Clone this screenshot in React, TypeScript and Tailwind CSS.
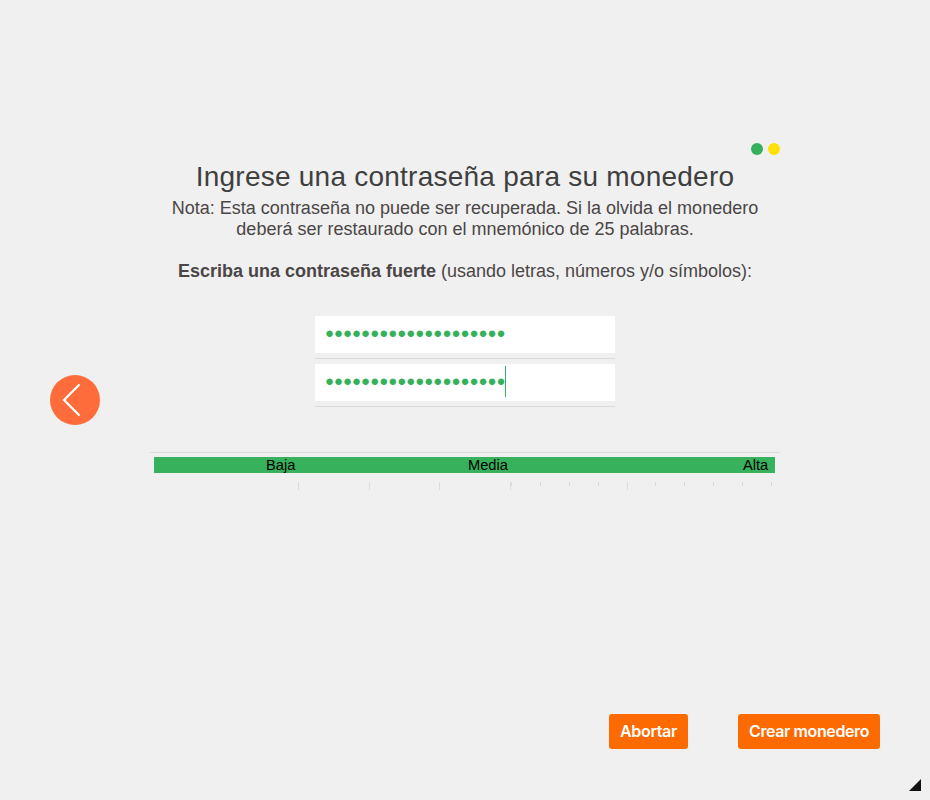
const MASK = "●".repeat(20);

function Field({ focused = false }: { focused?: boolean }) {
  return (
    <div className="h-[43px] w-[300px] border-b border-[#dbdbdb]">
      <div className="flex h-[37px] items-start bg-white pt-[2px] pl-[10px]">
        <span className="w-[180px] text-[15px] leading-[29px] tracking-[-0.03px] whitespace-nowrap text-[#36b05b]">
          {MASK}
        </span>
        {focused && <span className="h-[31px] w-px bg-[#36b05b]" />}
      </div>
    </div>
  );
}

// Gap before each tick of the scale, with whether the tick is a major one.
const TICKS = [
  { gap: 148, major: true },
  { gap: 70, major: true },
  { gap: 69, major: true },
  { gap: 70, major: true },
  { gap: 0, major: false },
  { gap: 28, major: false },
  { gap: 28, major: false },
  { gap: 28, major: false },
  { gap: 28, major: true },
  { gap: 27, major: false },
  { gap: 28, major: false },
  { gap: 28, major: false },
  { gap: 28, major: false },
  { gap: 28, major: false },
];

function StrengthMeter() {
  return (
    <div className="mt-[45px] w-[630px] border-t border-[#dbdbdb] pt-[4px]">
      <div className="ml-[4px] flex h-4 w-[621px] bg-[#38b15d] text-[14.67px] leading-4 text-black">
        <span className="ml-[112px] w-[202px]">Baja</span>
        <span className="w-[275px]">Media</span>
        <span>Alta</span>
      </div>
      <div className="mt-[9px] flex h-2">
        {TICKS.map((t, i) => (
          <span
            key={i}
            className={t.major ? "h-2 w-px shrink-0 bg-[#dbdbdb]" : "h-1 w-px shrink-0 bg-[#dbdbdb]"}
            style={{ marginLeft: t.gap }}
          />
        ))}
      </div>
    </div>
  );
}

export default function App() {
  return (
    <div className="flex h-[800px] w-[930px] flex-col bg-[#f0f0f0] font-['Liberation_Sans',Arial,sans-serif]">
      <div className="flex h-[714px] shrink-0">
        <button aria-label="Atrás" className="mt-[375px] ml-[50px] size-[50px] shrink-0 rounded-full bg-[#ff6c3c]">
          <svg width="50" height="50" viewBox="0 0 50 50" fill="none" stroke="#fff" strokeWidth="2.2">
            <path d="M29.5 9.5 L14 25 L29.5 40.5" />
          </svg>
        </button>
        <main className="ml-[50px] flex w-[630px] flex-col items-center pt-[143px]">
          <div className="flex w-full justify-end gap-[5px]">
            <span className="size-3 rounded-full bg-[#36b05b]" />
            <span className="size-3 rounded-full bg-[#ffe00a]" />
          </div>
          <h1 className="mt-[6px] text-[28px] leading-8 tracking-[0.24px] whitespace-nowrap text-[#3f3f3f]">
            Ingrese una contraseña para su monedero
          </h1>
          <p className="mt-[5px] text-center text-[18px] leading-[21px] whitespace-nowrap text-[#4a4646]">
            Nota: Esta contraseña no puede ser recuperada. Si la olvida el monedero
            <br />
            deberá ser restaurado con el mnemónico de 25 palabras.
            <br />
            <br />
            <b>Escriba una contraseña fuerte</b> (usando letras, números y/o símbolos):
          </p>
          <div className="mt-[34px] flex flex-col gap-[5px]">
            <Field />
            <Field focused />
          </div>
          <StrengthMeter />
        </main>
      </div>
      <div className="flex justify-end gap-[50px] pr-[50px] font-[Inter,sans-serif] text-[16px] font-semibold text-white">
        <button className="h-[35px] w-[79px] rounded-[3px] bg-[#fd6a00] pb-[2px] tracking-[-0.35px]">Abortar</button>
        <button className="h-[35px] w-[142px] rounded-[3px] bg-[#fd6a00] pb-[2px] tracking-[-0.4px]">
          Crear monedero
        </button>
      </div>
      <svg className="mt-[30px] ml-[909px]" width="12" height="12" viewBox="0 0 12 12">
        <path d="M12 0 V12 H0 Z" fill="#111" />
      </svg>
    </div>
  );
}
